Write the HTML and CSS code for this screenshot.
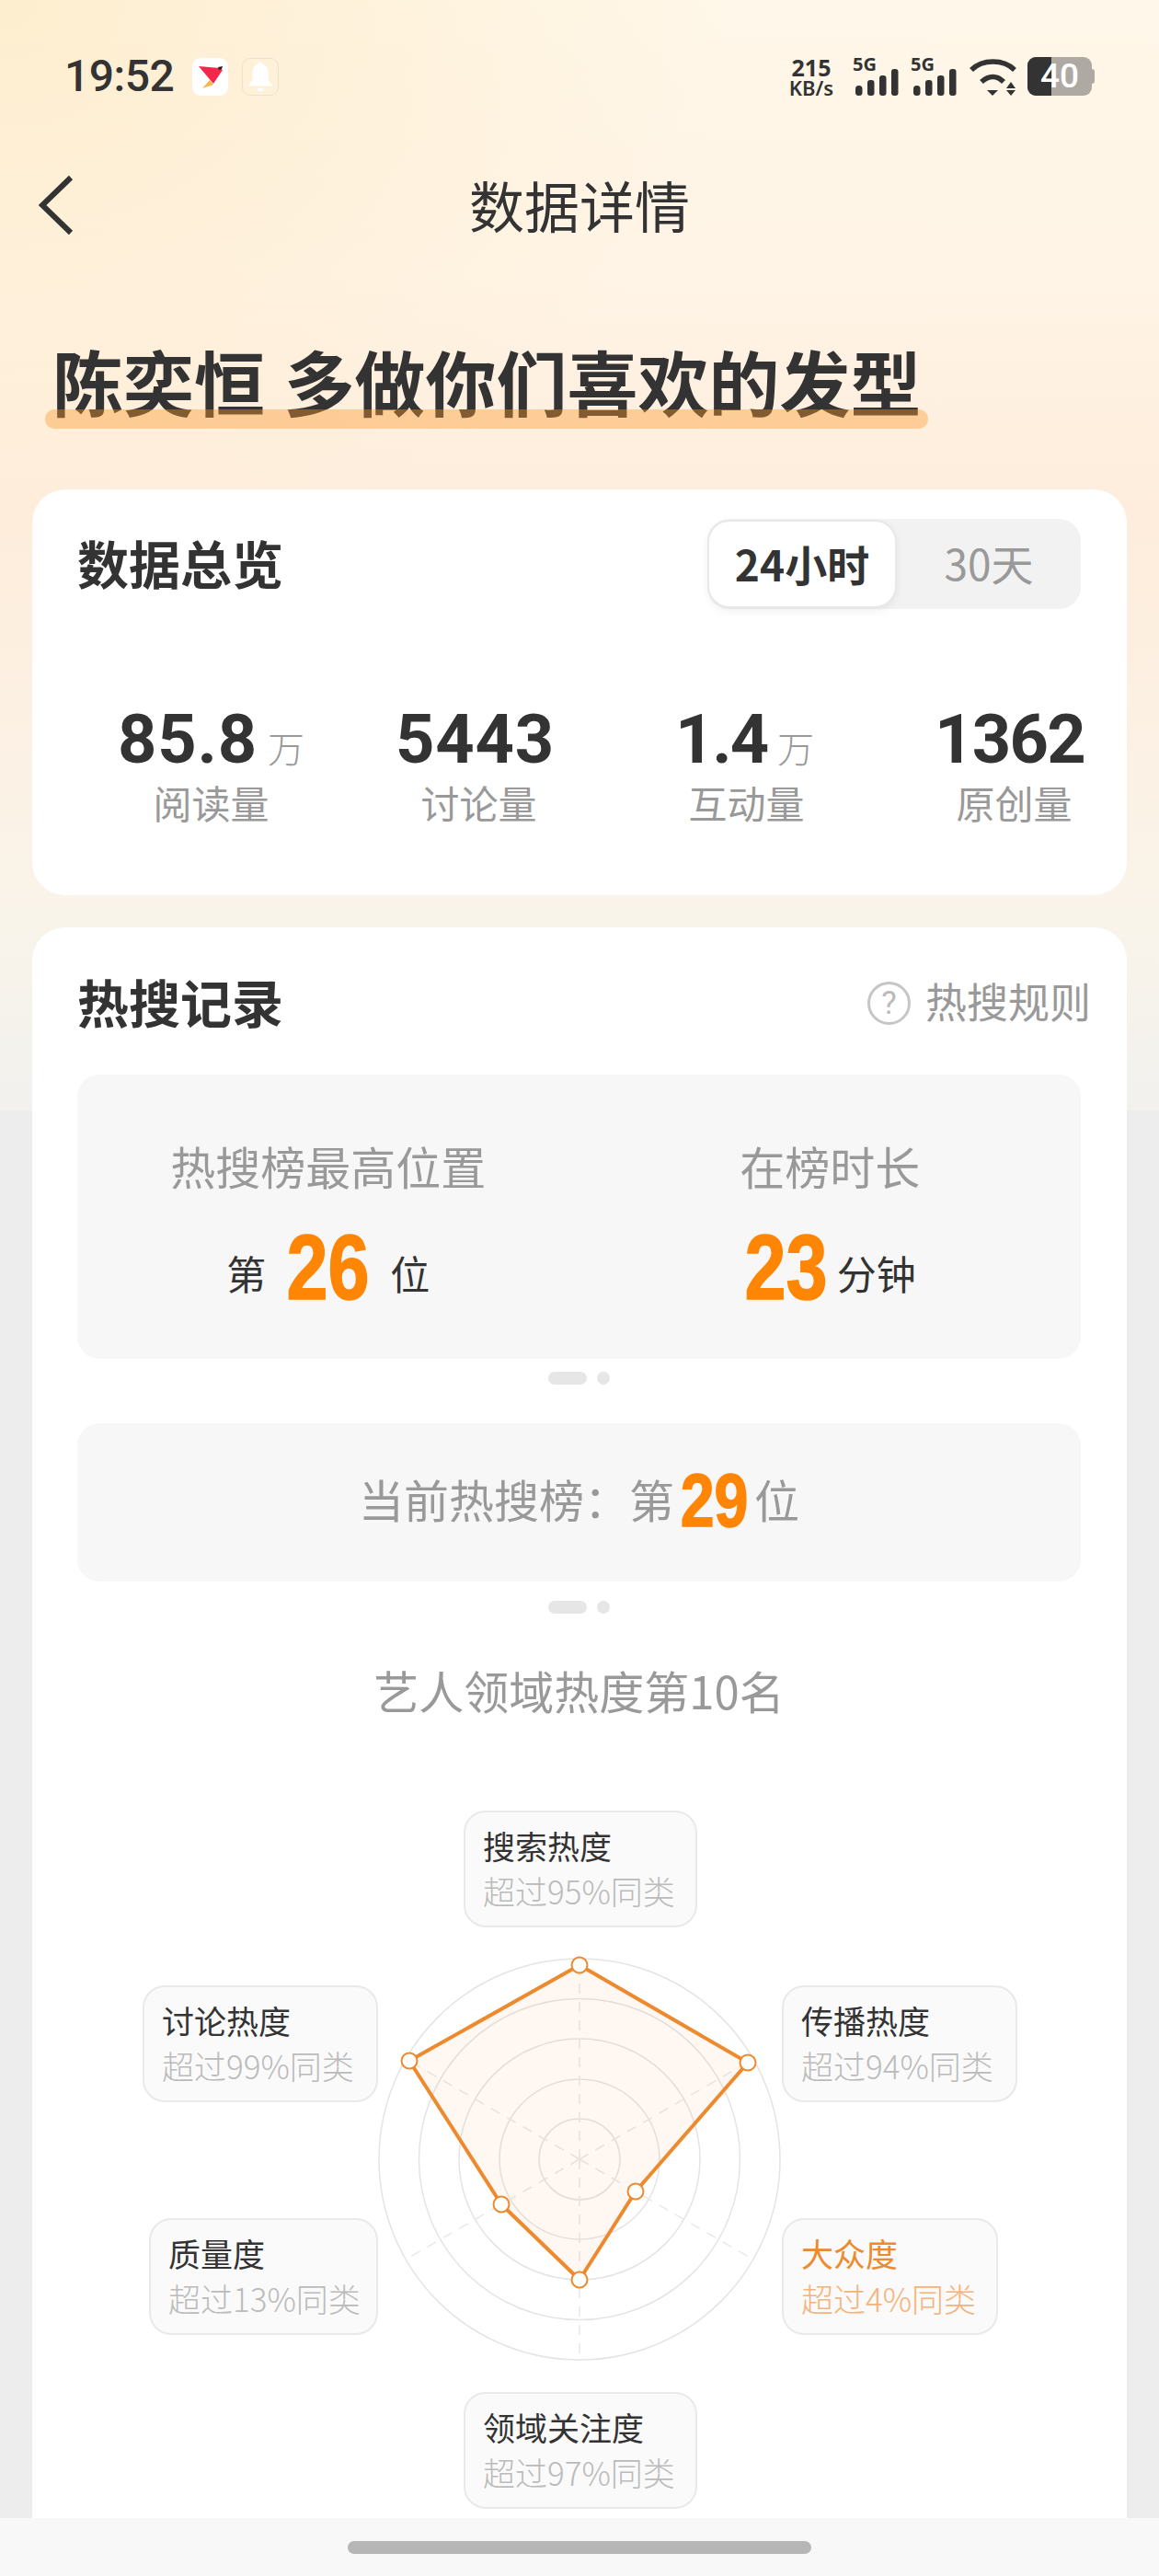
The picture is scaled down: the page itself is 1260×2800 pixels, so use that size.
FILE: index.html
```html
<!DOCTYPE html>
<html lang="zh-CN">
<head>
  <meta charset="UTF-8">
  <meta name="viewport" content="width=device-width, initial-scale=1.0">
  <link rel="stylesheet" href="styles.css">
  <title>数据详情</title>
</head>
<body>
  <div class="page">
    <div class="scroll">
      <!-- Status bar -->
      <div class="status">
        <div class="status-left">
          <span class="time">19:52</span>
          <span class="app-icon">
            <svg width="39" height="41" viewBox="0 0 39 41">
              <polygon points="7,9 30,11 33,13 23,28" fill="#f5264c"/>
              <polygon points="11,33 19,24 23,29" fill="#f7b84a"/>
              <polygon points="28,10 33,9 32,12 29,13" fill="#222"/>
            </svg>
          </span>
          <span class="bell-icon">
            <svg width="40" height="41" viewBox="0 0 40 41">
              <path d="M20 4c1.500 0 2.500 1 2.500 2.500 4 1.500 6 5 6 9.500v6.500c0 3 3 5 5 8H6.500c2-3 5-5 5-8V16c0-4.500 2-8 6-9.500C17.500 5 18.500 4 20 4z" fill="#fff"/>
              <path d="M16.500 33h7a3.500 3.500 0 0 1-7 0z" fill="#fff"/>
            </svg>
          </span>
        </div>
        <div class="status-right">
          <div class="speed"><b>215</b><span>KB/s</span></div>
          <div class="signal">
            <span class="signal-tag">5G</span>
            <svg width="50" height="43" viewBox="0 0 50 43">
              <rect x="3" y="31" width="7.500" height="11" rx="3.500" fill="#333"/>
              <rect x="16" y="25" width="7.500" height="17" rx="3" fill="#333"/>
              <rect x="29" y="20" width="7.500" height="22" rx="3" fill="#333"/>
              <rect x="42" y="13" width="7.500" height="29" rx="3" fill="#333"/>
            </svg>
          </div>
          <div class="signal">
            <span class="signal-tag">5G</span>
            <svg width="50" height="43" viewBox="0 0 50 43">
              <rect x="3" y="31" width="7.500" height="11" rx="3.500" fill="#333"/>
              <rect x="16" y="25" width="7.500" height="17" rx="3" fill="#333"/>
              <rect x="29" y="20" width="7.500" height="22" rx="3" fill="#333"/>
              <rect x="42" y="13" width="7.500" height="29" rx="3" fill="#333"/>
            </svg>
          </div>
          <svg class="wifi" width="52" height="43" viewBox="0 0 52 43">
            <path d="M3 14C15 2 38 2 50 14" fill="none" stroke="#333" stroke-width="5.500"/>
            <path d="M14 27c8-7.500 17-7.500 24 0" fill="none" stroke="#333" stroke-width="5.500"/>
            <polygon points="20,36 32,36 26,42" fill="#333"/>
            <polygon points="46,27 51,34 41,34" fill="#333"/>
            <polygon points="41,36 51,36 46,42" fill="#333"/>
          </svg>
          <div class="battery">
            <div class="battery-body">
              <span class="battery-fill"></span>
              <span class="battery-num">40</span>
            </div>
            <span class="battery-cap"></span>
          </div>
        </div>
      </div>

      <!-- Nav -->
      <div class="nav">
        <svg class="back" width="38" height="66" viewBox="0 0 38 66">
          <polyline points="35,3 4,33 35,63" fill="none" stroke="#333" stroke-width="6"/>
        </svg>
        <div class="nav-title">数据详情</div>
      </div>

      <div class="headline"><span class="headline-text">陈奕恒 多做你们喜欢的发型</span></div>

      <!-- Overview card -->
      <div class="card card-overview">
        <div class="card-head">
          <div class="card-title">数据总览</div>
          <div class="toggle">
            <div class="toggle-on">24小时</div>
            <div class="toggle-off">30天</div>
          </div>
        </div>
        <div class="stats">
          <div class="stat">
            <div class="stat-num">85.8<span class="stat-unit">万</span></div>
            <div class="stat-label">阅读量</div>
          </div>
          <div class="stat">
            <div class="stat-num stat-shift">5443</div>
            <div class="stat-label">讨论量</div>
          </div>
          <div class="stat">
            <div class="stat-num stat-one">1.4<span class="stat-unit">万</span></div>
            <div class="stat-label">互动量</div>
          </div>
          <div class="stat">
            <div class="stat-num stat-tight">1362</div>
            <div class="stat-label">原创量</div>
          </div>
        </div>
      </div>

      <!-- Hot search card -->
      <div class="card card-hot">
        <div class="hot-head">
          <div class="card-title">热搜记录</div>
          <div class="rules"><span class="rules-icon">?</span>热搜规则</div>
        </div>

        <div class="box box-record">
          <div class="record">
            <div class="record-label">热搜榜最高位置</div>
            <div class="record-value"><span class="unit">第</span><span class="big">26</span><span class="unit">位</span></div>
          </div>
          <div class="record">
            <div class="record-label">在榜时长</div>
            <div class="record-value record-tight"><span class="big">23</span><span class="unit">分钟</span></div>
          </div>
        </div>
        <div class="pager"><span class="pager-long"></span><span class="pager-dot"></span></div>

        <div class="box box-current">当前热搜榜：第<span class="big big-small">29</span>位</div>
        <div class="pager pager-second"><span class="pager-long"></span><span class="pager-dot"></span></div>

        <div class="rank-title">艺人领域热度第10名</div>

        <!-- Radar chart -->
        <div class="radar">
          <svg class="radar-chart" width="460" height="460" viewBox="0 0 460 460">
            <g fill="none" stroke="#e4e4e4" stroke-width="1.500">
              <circle cx="230" cy="230" r="218"/>
              <circle cx="230" cy="230" r="174.500"/>
              <circle cx="230" cy="230" r="131"/>
              <circle cx="230" cy="230" r="87"/>
              <circle cx="230" cy="230" r="44"/>
            </g>
            <g stroke="#e8e8e8" stroke-width="1.500" stroke-dasharray="11 9">
              <line x1="230" y1="230" x2="230" y2="12"/>
              <line x1="230" y1="230" x2="230" y2="448"/>
              <line x1="230" y1="230" x2="41" y2="121"/>
              <line x1="230" y1="230" x2="419" y2="339"/>
              <line x1="230" y1="230" x2="419" y2="121"/>
              <line x1="230" y1="230" x2="41" y2="339"/>
            </g>
            <polygon points="230,19 413,125 291,265 230,361 145,279 45,123" fill="rgba(248,140,60,0.07)" stroke="#ee8a2e" stroke-width="4" stroke-linejoin="round"/>
            <g fill="#fff" stroke="#ee8a2e" stroke-width="2">
              <circle cx="230" cy="19" r="8.500"/>
              <circle cx="413" cy="125" r="8.500"/>
              <circle cx="291" cy="265" r="8.500"/>
              <circle cx="230" cy="361" r="8.500"/>
              <circle cx="145" cy="279" r="8.500"/>
              <circle cx="45" cy="123" r="8.500"/>
            </g>
          </svg>
          <div class="tag tag-top"><div class="tag-name">搜索热度</div><div class="tag-sub">超过95%同类</div></div>
          <div class="tag tag-ur"><div class="tag-name">传播热度</div><div class="tag-sub">超过94%同类</div></div>
          <div class="tag tag-lr tag-low"><div class="tag-name">大众度</div><div class="tag-sub">超过4%同类</div></div>
          <div class="tag tag-bottom"><div class="tag-name">领域关注度</div><div class="tag-sub">超过97%同类</div></div>
          <div class="tag tag-ll"><div class="tag-name">质量度</div><div class="tag-sub">超过13%同类</div></div>
          <div class="tag tag-ul"><div class="tag-name">讨论热度</div><div class="tag-sub">超过99%同类</div></div>
        </div>
      </div>
    </div>

    <!-- Gesture bar -->
    <div class="gesture"><span class="gesture-pill"></span></div>
  </div>
</body>
</html>
```

FILE: styles.css
```css
* {
  box-sizing: border-box;
}

body {
  margin: 0;
  font-family: "Noto Sans CJK SC", "Noto Sans", sans-serif;
  color: #333;
}

.page {
  display: flex;
  flex-direction: column;
  width: 1260px;
  height: 2800px;
  overflow: hidden;
  background-color: #ededed;
  background-image:
    radial-gradient(ellipse 800px 620px at 0 0, rgba(253, 232, 190, 0.6), rgba(253, 232, 190, 0)),
    linear-gradient(180deg, #fff7e9 0, #fff4e6 300px, #feeddc 560px, #fbf2e6 880px, #f9f4ea 1000px, #f2f1ee 1207px);
  background-size: 100% 1207px;
  background-repeat: no-repeat;
}

.scroll {
  flex: 1;
  overflow: hidden;
}

/* status bar */
.status {
  display: flex;
  justify-content: space-between;
  align-items: center;
  height: 166px;
  padding: 0 70px;
}

.status-left, .status-right {
  display: flex;
  align-items: center;
}

.time {
  font-family: Roboto, sans-serif;
  font-size: 48px;
  line-height: 50px;
  font-weight: 500;
  letter-spacing: -0.5px;
  margin-right: 20px;
}

.app-icon, .bell-icon {
  display: block;
  width: 39px;
  height: 41px;
  border-radius: 9px;
}

.app-icon svg, .bell-icon svg {
  display: block;
}

.app-icon {
  background: #fff;
}

.bell-icon {
  width: 40px;
  margin-left: 15px;
  border: 1px solid rgba(225, 215, 195, 0.6);
  border-radius: 9px;
}

.bell-icon svg {
  margin: -1px;
}

.speed {
  display: flex;
  flex-direction: column;
  align-items: center;
  width: 50px;
  margin-right: 20px;
  font-family: "Noto Sans", sans-serif;
  color: #333;
}

.speed b {
  font-size: 25px;
  line-height: 24px;
  font-weight: 700;
}

.speed span {
  font-size: 22px;
  line-height: 21px;
  font-weight: 600;
}

.signal {
  position: relative;
  width: 50px;
  height: 43px;
  margin-right: 13px;
}

.signal svg {
  display: block;
}

.signal-tag {
  position: absolute;
  left: 0;
  top: -4px;
  font-family: "Noto Sans", sans-serif;
  font-size: 20px;
  line-height: 24px;
  font-weight: 700;
}

.wifi {
  display: block;
  margin-right: 12px;
}

.battery {
  display: flex;
  align-items: center;
}

.battery-body {
  position: relative;
  width: 70px;
  height: 42px;
  border-radius: 9px;
  background: #aea9a2;
  overflow: hidden;
  text-align: center;
}

.battery-fill {
  position: absolute;
  left: 0;
  top: 0;
  width: 26px;
  height: 42px;
  background: #333;
}

.battery-num {
  position: relative;
  font-family: Roboto, sans-serif;
  font-size: 37px;
  line-height: 42px;
  font-weight: 500;
  color: #fff;
}

.battery-cap {
  width: 3px;
  height: 16px;
  border-radius: 0 3px 3px 0;
  background: #aea9a2;
}

/* nav */
.nav {
  display: flex;
  justify-content: center;
  align-items: center;
  position: relative;
  height: 118px;
  padding-bottom: 6px;
}

.back {
  position: absolute;
  left: 42px;
  top: 24px;
}

.nav-title {
  font-size: 60px;
  line-height: 80px;
  font-weight: 400;
  color: #333;
}

.headline {
  margin-top: 80px;
  padding-left: 57px;
  height: 103px;
}

.headline-text {
  position: relative;
  display: inline-block;
  font-size: 77px;
  line-height: 100px;
  font-weight: 700;
  word-spacing: 3px;
  white-space: nowrap;
}

.headline-text::after {
  content: "";
  position: absolute;
  left: -8px;
  right: -8px;
  bottom: -2px;
  height: 21px;
  border-radius: 10px;
  background: rgba(253, 153, 46, 0.4);
}

/* cards */
.card {
  margin: 0 35px;
  background: #fff;
  border-radius: 36px;
}

.card-overview {
  height: 441px;
  margin-top: 65px;
  padding: 32px 50px 0 49px;
}

.card-head, .hot-head {
  display: flex;
  justify-content: space-between;
  align-items: center;
}

.card-title {
  font-size: 56px;
  line-height: 80px;
  font-weight: 700;
  color: #333;
}

.card-head .card-title {
  margin-top: -5px;
}

.toggle {
  display: flex;
  width: 406px;
  height: 98px;
  border-radius: 24px;
  background: #f2f2f2;
}

.toggle-on, .toggle-off {
  display: flex;
  justify-content: center;
  align-items: center;
  height: 96px;
  padding-bottom: 3px;
}

.toggle-on {
  width: 206px;
  margin-top: 1px;
  border: 2px solid #e8e8e8;
  border-radius: 24px;
  background: #fff;
  box-shadow: 0 3px 8px rgba(0, 0, 0, 0.06);
  font-size: 46px;
  font-weight: 700;
}

.toggle-off {
  flex: 1;
  font-size: 46px;
  font-weight: 400;
  color: #999;
}

.stats {
  display: grid;
  grid-template-columns: repeat(4, 291px);
  margin-top: 102px;
}

.stat {
  text-align: center;
}

.stat-num {
  height: 80px;
  font-family: Roboto, sans-serif;
  font-size: 74px;
  line-height: 80px;
  font-weight: 700;
  letter-spacing: 0.800px;
  white-space: nowrap;
}

.stat-shift {
  margin-left: -8px;
}

.stat-one {
  letter-spacing: -2.200px;
  margin-left: -4px;
}

.stat-tight {
  margin-left: -10px;
  letter-spacing: -1.700px;
}

.stat-unit {
  margin-left: 11px;
  font-family: "Noto Sans CJK SC", sans-serif;
  font-size: 40px;
  line-height: 40px;
  font-weight: 300;
  letter-spacing: 0;
  color: #999;
}

.stat-label {
  font-size: 42px;
  line-height: 56px;
  font-weight: 400;
  color: #999;
}

.card-hot {
  margin-top: 35px;
  padding: 40px 50px 0 49px;
  height: 1800px;
}

.rules {
  display: flex;
  align-items: center;
  margin-right: -11px;
  font-size: 45px;
  line-height: 80px;
  font-weight: 400;
  color: #999;
}

.rules-icon {
  display: flex;
  justify-content: center;
  align-items: center;
  width: 47px;
  height: 47px;
  margin-right: 16px;
  margin-top: 5px;
  border: 3px solid #c6c6c6;
  border-radius: 50%;
  font-family: Roboto, sans-serif;
  font-size: 35px;
  line-height: 40px;
  color: #bbb;
}

.box {
  background: #f7f7f7;
  border-radius: 24px;
}

.box-record {
  display: grid;
  grid-template-columns: 1fr 1fr;
  height: 309px;
  margin-top: 40px;
  padding-top: 63px;
}

.record {
  text-align: center;
}

.record-label {
  font-size: 49px;
  line-height: 72px;
  font-weight: 400;
  color: #999;
}

.record-value {
  display: flex;
  justify-content: center;
  align-items: center;
  gap: 22px;
  height: 110px;
  margin-top: 19px;
  color: #333;
}

.record-tight {
  gap: 10px;
}

.unit {
  margin-top: 11px;
  font-size: 43px;
  line-height: 60px;
  font-weight: 400;
}

/* condensed orange digits: no narrow font here, so squeeze and pull the margins back */
.big {
  display: inline-block;
  margin: 0 -10px;
  transform: scaleX(0.81);
  font-family: "Liberation Sans", sans-serif;
  font-size: 100px;
  line-height: 110px;
  font-weight: 700;
  color: #ff8505;
  -webkit-text-stroke: 1.5px #ff8505;
}

.pager {
  display: flex;
  justify-content: center;
  gap: 11px;
  margin-top: 14px;
}

.pager-long {
  width: 42px;
  height: 14px;
  border-radius: 7px;
  background: #e6e6e6;
}

.pager-dot {
  width: 14px;
  height: 14px;
  border-radius: 7px;
  background: #e6e6e6;
}

.pager-second {
  margin-top: 21px;
}

.box-current {
  display: flex;
  justify-content: center;
  align-items: center;
  gap: 6px;
  height: 172px;
  margin-top: 42px;
  padding-bottom: 9px;
  font-size: 49px;
  font-weight: 400;
  color: #999;
}

.big-small {
  margin: 4px -8px 0;
  font-size: 82px;
  line-height: 90px;
}

.rank-title {
  margin-top: 48px;
  margin-bottom: 2px;
  font-size: 49px;
  line-height: 70px;
  font-weight: 400;
  color: #999;
  text-align: center;
}

/* radar nodes sit on a free canvas, coordinates are relative to .radar */
.radar {
  position: relative;
  height: 860px;
}

.radar-chart {
  position: absolute;
  left: 316px;
  top: 243px;
}

.tag {
  position: absolute;
  height: 127px;
  padding: 11px 19px 0;
  background: #fafafa;
  border: 2px solid #e9e9e9;
  border-radius: 24px;
  white-space: nowrap;
}

.tag-name {
  font-size: 35px;
  line-height: 50px;
  font-weight: 400;
  color: #333;
}

.tag-sub {
  font-size: 35px;
  line-height: 48px;
  font-weight: 300;
  color: #bbb;
}

.tag-low .tag-name {
  color: #ee8a2e;
}

.tag-low .tag-sub {
  color: #f5b27a;
}

.tag-top {
  left: 420px;
  top: 94px;
  width: 254px;
}

.tag-ur {
  left: 766px;
  top: 284px;
  width: 256px;
}

.tag-lr {
  left: 766px;
  top: 537px;
  width: 235px;
}

.tag-bottom {
  left: 420px;
  top: 726px;
  width: 254px;
}

.tag-ll {
  left: 78px;
  top: 537px;
  width: 249px;
}

.tag-ul {
  left: 71px;
  top: 284px;
  width: 256px;
}

/* gesture bar */
.gesture {
  display: flex;
  justify-content: center;
  align-items: center;
  flex: none;
  height: 63px;
  background: #f8f8f8;
}

.gesture-pill {
  width: 504px;
  height: 14px;
  border-radius: 7px;
  background: #b6b6b6;
}
```
